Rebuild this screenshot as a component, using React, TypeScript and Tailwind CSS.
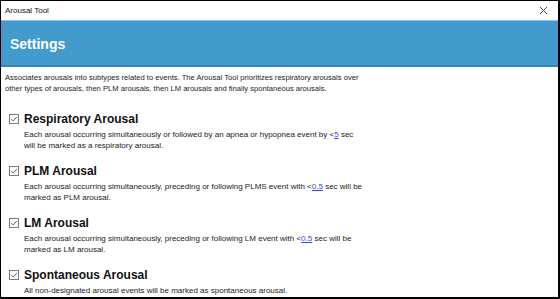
import React from "react";

interface Section {
  title: string;
  lines: React.ReactNode[];
}

const Link = ({ children }: { children: React.ReactNode }) => (
  <span className="text-[#2f48ff] underline">{children}</span>
);

const sections: Section[] = [
  {
    title: "Respiratory Arousal",
    lines: [
      <>
        Each arousal occurring simultaneously or followed by an apnea or hypopnea event by &lt;<Link>5</Link> sec
      </>,
      <>will be marked as a respiratory arousal.</>,
    ],
  },
  {
    title: "PLM Arousal",
    lines: [
      <>
        Each arousal occurring simultaneously, preceding or following PLMS event with &lt;<Link>0.5</Link> sec will be
      </>,
      <>marked as PLM arousal.</>,
    ],
  },
  {
    title: "LM Arousal",
    lines: [
      <>
        Each arousal occurring simultaneously, preceding or following LM event with &lt;<Link>0.5</Link> sec will be
      </>,
      <>marked as LM arousal.</>,
    ],
  },
  {
    title: "Spontaneous Arousal",
    lines: [<>All non-designated arousal events will be marked as spontaneous arousal.</>],
  },
];

const CheckBox = () => (
  <svg width="10" height="10" viewBox="0 0 10 10" className="shrink-0">
    <rect x="0.5" y="0.5" width="9" height="9" fill="white" stroke="#7a7a7a" />
    <path d="M2.3 5.1 L4.2 7 L7.8 3" fill="none" stroke="#555" strokeWidth="0.9" />
  </svg>
);

export default function App() {
  return (
    <div className="w-[560px] h-[299px] bg-white border-black border-l border-t border-r-2 border-b-2 flex flex-col overflow-hidden font-['Liberation_Sans',Arial,sans-serif]">
      <div className="h-[19px] flex items-center justify-between pl-[4px] pr-[10px] text-[8px] text-[#111]">
        <span>Arousal Tool</span>
        <svg width="9" height="9" viewBox="0 0 9 9">
          <path d="M1 1 L8 8 M8 1 L1 8" stroke="#444" strokeWidth="1" />
        </svg>
      </div>
      <div className="h-[47px] bg-[#429acd] border-t border-[#8cc4e4] border-b-2 border-b-[#3784b6] flex items-center pl-[9px] pt-[2px]">
        <span className="text-white font-bold text-[14px]">Settings</span>
      </div>

      <div className="pl-[4px] pt-[5px] text-[7.6px] leading-[11px] text-[#222]">
        <p>Associates arousals into subtypes related to events. The Arousal Tool prioritizes respiratory arousals over</p>
        <p>other types of arousals, then PLM arousals, then LM arousals and finally spontaneous arousals.</p>
      </div>

      <div className="flex flex-col gap-[12px] pl-[8px] pt-[17px]">
        {sections.map((s) => (
          <div key={s.title} className="flex flex-col">
            <div className="flex items-center gap-[5px] h-[15px]">
              <CheckBox />
              <span className="text-[12px] font-bold text-[#111]">{s.title}</span>
            </div>
            <div className="pl-[15px] pt-[4px] text-[8px] leading-[10.5px] text-[#222]">
              {s.lines.map((l, i) => (
                <p key={i}>{l}</p>
              ))}
            </div>
          </div>
        ))}
      </div>
    </div>
  );
}
